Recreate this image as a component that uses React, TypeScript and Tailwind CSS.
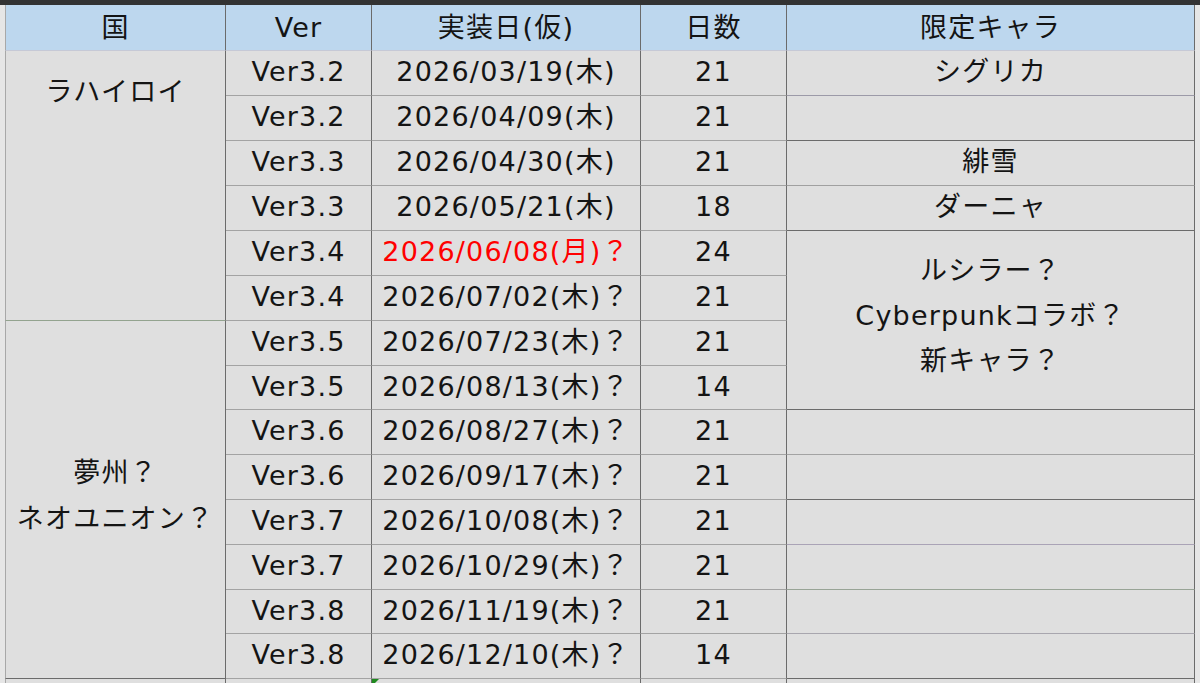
import React from 'react';

type Row = {
  ver: string;
  date: string;
  days: number;
  red?: boolean;
  country?: { lines: string[]; span: string; bb: string };
  chara?: { lines: string[]; span: string; bb: string };
};

const rows: Row[] = [
  {
    ver: 'Ver3.2', date: '2026/03/19(木)', days: 21,
    country: { lines: ['ラハイロイ'], span: 'row-span-6 justify-start pt-[18px]', bb: 'border-b-[#93a38f]' },
    chara: { lines: ['シグリカ'], span: '', bb: 'border-b-[#9c9aa8]' },
  },
  { ver: 'Ver3.2', date: '2026/04/09(木)', days: 21, chara: { lines: [], span: '', bb: 'border-b-[#6b6b6b]' } },
  { ver: 'Ver3.3', date: '2026/04/30(木)', days: 21, chara: { lines: ['緋雪'], span: '', bb: 'border-b-[#a0a0a0]' } },
  { ver: 'Ver3.3', date: '2026/05/21(木)', days: 18, chara: { lines: ['ダーニャ'], span: '', bb: 'border-b-[#6b6b6b]' } },
  {
    ver: 'Ver3.4', date: '2026/06/08(月)？', days: 24, red: true,
    chara: { lines: ['ルシラー？', 'Cyberpunkコラボ？', '新キャラ？'], span: 'row-span-4 justify-center pb-[10px]', bb: 'border-b-[#6b6b6b]' },
  },
  { ver: 'Ver3.4', date: '2026/07/02(木)？', days: 21 },
  {
    ver: 'Ver3.5', date: '2026/07/23(木)？', days: 21,
    country: { lines: ['夢州？', 'ネオユニオン？'], span: 'row-span-8 justify-center pb-[8px]', bb: 'border-b-[#6b6b6b]' },
  },
  { ver: 'Ver3.5', date: '2026/08/13(木)？', days: 14 },
  { ver: 'Ver3.6', date: '2026/08/27(木)？', days: 21, chara: { lines: [], span: '', bb: 'border-b-[#a3a3a3]' } },
  { ver: 'Ver3.6', date: '2026/09/17(木)？', days: 21, chara: { lines: [], span: '', bb: 'border-b-[#6b6b6b]' } },
  { ver: 'Ver3.7', date: '2026/10/08(木)？', days: 21, chara: { lines: [], span: '', bb: 'border-b-[#aaa3b6]' } },
  { ver: 'Ver3.7', date: '2026/10/29(木)？', days: 21, chara: { lines: [], span: '', bb: 'border-b-[#98a496]' } },
  { ver: 'Ver3.8', date: '2026/11/19(木)？', days: 21, chara: { lines: [], span: '', bb: 'border-b-[#a8a6ae]' } },
  { ver: 'Ver3.8', date: '2026/12/10(木)？', days: 14, chara: { lines: [], span: '', bb: 'border-b-[#6b6b6b]' } },
];

const cell = 'flex border-r border-b border-r-[#6b6b6b] bg-[#dfdfdf]';
const item = `${cell} items-center justify-center pb-[3px] border-b-[#a3a3a3]`;
const head = 'flex items-center justify-center border-r border-b border-r-[#6b6b6b] border-b-[#c6c9d6] bg-[#bdd7ee]';

export default function App() {
  return (
    <div className="h-[683px] w-[1200px] overflow-hidden bg-[#e4e4e4] text-[27px] leading-[45px] tracking-[1.2px] text-[#141414] font-['DejaVu_Sans','Noto_Sans_CJK_JP',sans-serif]">
      {/* top bar */}
      <div className="h-[5px] bg-[#333333]" />

      <div className="flex">
        <div className="w-[5px] shrink-0 bg-[#e6e6e6]" />

        <div className="grid grid-cols-[221px_146px_269px_146px_408px] grid-rows-[46px_45px_45px_45px_45px_45px_45px_45px_44px_45px_45px_45px_45px_44px_45px_20px]">
          {/* header */}
          <div className={`${head} border-l border-l-[#a8a8a8]`}>国</div>
          <div className={head}>Ver</div>
          <div className={head}>実装日(仮)</div>
          <div className={head}>日数</div>
          <div className={head}>限定キャラ</div>

          {rows.map((r, i) => (
            <React.Fragment key={i}>
              {r.country && (
                <div className={`${cell} ${r.country.span} ${r.country.bb} border-l border-l-[#a8a8a8] flex-col items-center text-center`}>
                  {r.country.lines.map((l) => (
                    <div key={l} className="leading-[46px]">{l}</div>
                  ))}
                </div>
              )}
              <div className={item}>{r.ver}</div>
              <div className={`${item} ${r.red ? 'text-[#ff0000]' : ''}`}>{r.date}</div>
              <div className={item}>{r.days}</div>
              {r.chara && (
                <div className={`${cell} ${r.chara.span || 'justify-center pb-[3px]'} ${r.chara.bb} flex-col items-center`}>
                  {r.chara.lines.map((l) => (
                    <div key={l}>{l}</div>
                  ))}
                </div>
              )}
            </React.Fragment>
          ))}

          {/* next sheet row, cut off */}
          <div className="border-r border-l border-r-[#6b6b6b] border-l-[#a8a8a8] bg-[#dfdfdf]" />
          <div className="border-r border-r-[#6b6b6b] bg-[#dfdfdf]" />
          <div className="relative border-r border-r-[#6b6b6b] bg-[#dfdfdf]">
            <svg className="absolute left-0 top-0" width="7" height="7" viewBox="0 0 7 7">
              <polygon points="0,0 7,0 0,7" fill="#1f8a1f" />
            </svg>
          </div>
          <div className="border-r border-r-[#6b6b6b] bg-[#dfdfdf]" />
          <div className="border-r border-r-[#6b6b6b] bg-[#dfdfdf]" />
        </div>

        <div className="w-[5px] shrink-0 bg-[#e6e6e6]" />
      </div>
    </div>
  );
}
